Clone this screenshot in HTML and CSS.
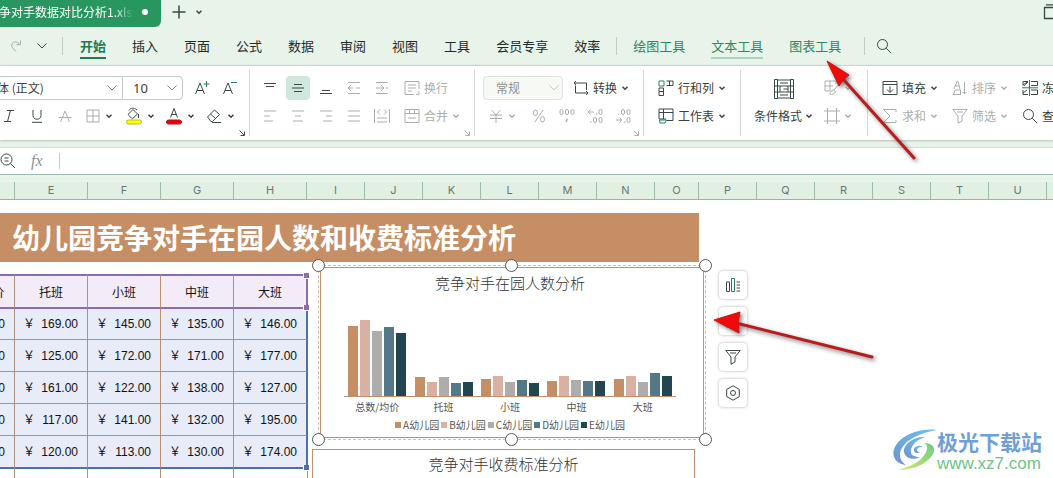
FILE: index.html
```html
<!DOCTYPE html>
<html lang="zh-CN">
<head>
<meta charset="utf-8">
<title>幼儿园竞争对手数据对比分析1.xlsx</title>
<link rel="stylesheet" href="styles.css">
</head>
<body>
<svg class="defs" aria-hidden="true">
  <symbol id="caret" viewBox="0 0 8 8"><path d="M1.5 2.8 4 5.3 6.500 2.800" stroke-width="1.500"/></symbol>
  <symbol id="chev" viewBox="0 0 12 12"><path d="M1.500 3.500 6 8l4.500-4.500"/></symbol>
  <symbol id="launch" viewBox="0 0 6 6"><path d="M.5.500 5 5M5.500 1.500v4h-4"/></symbol>
  <symbol id="search" viewBox="0 0 16 16"><circle cx="6.500" cy="6.500" r="5"/><path d="m10.200 10.200 5 5"/></symbol>
  <symbol id="funnel" viewBox="0 0 16 16"><path d="M.8 1.500h14.400L10 8v5l-4 2.200V8z"/><path d="M5 4h6" /></symbol>
</svg>

<header class="tabs">
  <div class="doc-tab"><span class="doc-name">争对手数据对比分析1.xlsx</span><i class="dot"></i></div>
  <button class="plain" aria-label="新建"><svg width="14" height="14" viewBox="0 0 14 14"><path d="M7 .5v13M.5 7h13" stroke-width="1.500"/></svg></button>
  <button class="plain list" aria-label="标签列表"><svg width="8" height="8"><use href="#caret"/></svg></button>
  <button class="plain window" aria-label="窗口"><svg width="16" height="16" viewBox="0 0 16 16"><path d="M3 .8h12M1.500 3.500h13v11h-13z" stroke-width="1.300"/></svg></button>
</header>

<nav class="menu">
  <button class="plain dim" aria-label="重做"><svg width="12" height="14" viewBox="0 0 12 14"><path d="M6 12.500 2.800 9C-.5 4.500 5 .5 9 4.500l1 1M10.500 1.500v4.200H6.300"/></svg></button>
  <button class="plain" aria-label="更多"><svg width="12" height="12"><use href="#chev"/></svg></button>
  <i class="bar"></i>
  <a class="on" href="#">开始</a><a href="#">插入</a><a href="#">页面</a><a href="#">公式</a><a href="#">数据</a><a href="#">审阅</a><a href="#">视图</a><a href="#">工具</a><a href="#">会员专享</a><a href="#">效率</a>
  <i class="bar mid"></i>
  <a class="tool" href="#">绘图工具</a><a class="tool under" href="#">文本工具</a><a class="tool" href="#">图表工具</a>
  <i class="bar end"></i>
  <button class="plain" aria-label="搜索"><svg width="16" height="16"><use href="#search"/></svg></button>
</nav>

<section class="ribbon">
  <div class="group g-font">
    <div class="row">
      <label class="combo face"><select aria-label="字体"><option>宋体 (正文)</option></select><svg width="12" height="12"><use href="#chev"/></svg></label>
      <label class="combo size"><select aria-label="字号"><option>10</option></select><svg width="12" height="12"><use href="#chev"/></svg></label>
      <button class="cell first" aria-label="增大字号"><svg width="16" height="16" viewBox="0 0 16 16"><path d="M1.500 14 6 3l4.500 11M3 10.500h6"/><path class="green" d="M12.500 1v6M9.500 4h6"/></svg></button>
      <button class="cell" aria-label="减小字号"><svg width="16" height="16" viewBox="0 0 16 16"><path d="M1.500 14 6 3l4.500 11M3 10.500h6"/><path class="green" d="M9 2.500h6"/></svg></button>
    </div>
    <div class="row fmt">
      <button class="cell" aria-label="斜体"><svg width="14" height="14" viewBox="0 0 14 14"><path d="M5 1.500h7M2 12.500h7M8.500 1.500l-3 11"/></svg></button>
      <button class="cell" aria-label="下划线"><svg width="14" height="14" viewBox="0 0 14 14"><path d="M3 1v5.500c0 5 8 5 8 0V1M2 13.300h10"/></svg></button>
      <button class="cell dim" aria-label="删除线"><svg width="14" height="14" viewBox="0 0 14 14"><path d="m2.500 13 4.500-11 4.500 11M.5 8.500h13"/></svg></button>
      <button class="split" aria-label="边框"><svg class="dimmed" width="14" height="14" viewBox="0 0 14 14"><path d="M1 1h12v12H1zM7 1v12M1 7h12"/></svg><svg width="8" height="8"><use href="#caret"/></svg></button>
      <button class="split" aria-label="填充颜色"><svg width="16" height="18" viewBox="0 0 16 18"><path d="M7 2.500 2.500 7c-.8 1 3.500 5 4.500 4.200L11.500 7zM3 3.500c1.500-3 5-3 8-.5M12.500 7v4"/><rect class="yellow" x=".5" y="13" width="15" height="4" rx="2"/></svg><svg width="8" height="8"><use href="#caret"/></svg></button>
      <button class="split" aria-label="字体颜色"><svg width="16" height="18" viewBox="0 0 16 18"><path d="m4.500 10.500 3.500-9 3.500 9M5.700 7.500h4.600"/><rect class="red" x=".5" y="13" width="15" height="4" rx="2"/></svg><svg width="8" height="8"><use href="#caret"/></svg></button>
      <button class="split" aria-label="清除"><svg width="16" height="16" viewBox="0 0 16 16"><path d="m1.500 9 7-7 5 4.500-7 7h-1.500zM4.500 6l5 4.500M6 14.500h9"/></svg><svg width="8" height="8"><use href="#caret"/></svg></button>
    </div>
    <svg class="launch" width="6" height="6"><use href="#launch"/></svg>
  </div>

  <div class="group g-align">
    <div class="row">
      <button class="cell" aria-label="顶端对齐"><svg width="14" height="14" viewBox="0 0 14 14"><path d="M1 2.500h12M3 5.500h8"/></svg></button>
      <button class="cell on" aria-label="垂直居中"><svg width="14" height="14" viewBox="0 0 14 14"><path d="M3 3.500h8M1 7h12M3 10.500h8"/></svg></button>
      <button class="cell" aria-label="底端对齐"><svg width="14" height="14" viewBox="0 0 14 14"><path d="M3 9.500h8M1 12.500h12"/></svg></button>
      <button class="cell dim" aria-label="减少缩进"><svg width="14" height="14" viewBox="0 0 14 14"><path d="M1 1.500h12M1 12.500h12M1 7h5m3 0h4M4 4 1 7l3 3"/></svg></button>
      <button class="cell dim" aria-label="增加缩进"><svg width="14" height="14" viewBox="0 0 14 14"><path d="M1 1.500h12M1 12.500h12M1 7h8m2 0h2M6 4l3 3-3 3"/></svg></button>
      <button class="text dim"><svg width="16" height="16" viewBox="0 0 16 16"><path d="M10 14.500H1V1.500h14V9M4 5h8M4 8h8M4 11h4M15 11v3.500h-3"/></svg>换行</button>
    </div>
    <div class="row">
      <button class="cell dim" aria-label="左对齐"><svg width="14" height="14" viewBox="0 0 14 14"><path d="M1 2h12M1 7h6M1 12h9"/></svg></button>
      <button class="cell dim" aria-label="居中"><svg width="14" height="14" viewBox="0 0 14 14"><path d="M1 2h12M4 7h6M2 12h10"/></svg></button>
      <button class="cell dim" aria-label="右对齐"><svg width="14" height="14" viewBox="0 0 14 14"><path d="M1 2h12M7 7h6M4 12h9"/></svg></button>
      <button class="cell dim" aria-label="两端对齐"><svg width="14" height="14" viewBox="0 0 14 14"><path d="M1 2h12M1 7h12M1 12h12"/></svg></button>
      <button class="cell dim" aria-label="分散对齐"><svg width="16" height="16" viewBox="0 0 16 16"><path d="M.5 1v14M15.500 1v14M3 10h10M3 14h10M6 1.500 3.500 4 6 6.500M10 1.500 12.500 4 10 6.500"/></svg></button>
      <button class="text dim"><svg width="16" height="16" viewBox="0 0 16 16"><path d="M1 1.500h14v13H1zM1 5.500h14M5.500 1.500v4M10.500 1.500v4M4 10h8"/></svg>合并<svg width="8" height="8"><use href="#caret"/></svg></button>
    </div>
    <svg class="launch dimmed" width="6" height="6"><use href="#launch"/></svg>
  </div>

  <div class="group g-num">
    <div class="row">
      <label class="combo kind"><select aria-label="数字格式"><option>常规</option></select><svg width="12" height="12"><use href="#chev"/></svg></label>
      <button class="text"><svg width="16" height="16" viewBox="0 0 16 16"><path d="M1 3h12.500V10M2.500 5.500v7.500H15M3 1l-2 2 2 2M13 11l2 2-2 2"/></svg>转换<svg width="8" height="8"><use href="#caret"/></svg></button>
    </div>
    <div class="row">
      <button class="split yen dim" aria-label="货币"><svg width="14" height="14" viewBox="0 0 14 14"><path d="m2.500 1 4.500 5 4.500-5M1 6h12M1 9.500h12M7 6v8"/></svg><svg width="8" height="8"><use href="#caret"/></svg></button>
      <button class="cell dim" aria-label="百分比"><svg width="14" height="14" viewBox="0 0 14 14"><ellipse cx="3.500" cy="3.800" rx="2" ry="2.800"/><ellipse cx="10.500" cy="10.200" rx="2" ry="2.800"/><path d="m11 1-8 12"/></svg></button>
      <button class="cell dim" aria-label="千位分隔"><svg width="16" height="16" viewBox="0 0 16 16"><rect x="1" y="1.500" width="3" height="5" rx="1.500"/><rect x="6.500" y="1.500" width="3" height="5" rx="1.500"/><rect x="12" y="1.500" width="3" height="5" rx="1.500"/><path d="M8 10.500v1.500l-1 2" stroke-width="1.500"/></svg></button>
      <button class="cell dim" aria-label="增加小数位"><svg width="16" height="16" viewBox="0 0 16 16"><path d="M7 4H1m2.500-2.500L1 4l2.500 2.500M9 6h1.500M3 14h1.500"/><rect x="12" y="1.500" width="3" height="5" rx="1.500"/><rect x="6.500" y="9.500" width="3" height="5" rx="1.500"/><rect x="12" y="9.500" width="3" height="5" rx="1.500"/></svg></button>
      <button class="cell dim" aria-label="减少小数位"><svg width="16" height="16" viewBox="0 0 16 16"><path d="M1 12h6M4.500 9.500 7 12l-2.500 2.500M3 6h1.500M9 14h1.500"/><rect x="6.500" y="1.500" width="3" height="5" rx="1.500"/><rect x="12" y="1.500" width="3" height="5" rx="1.500"/><rect x="12" y="9.500" width="3" height="5" rx="1.500"/></svg></button>
    </div>
    <svg class="launch dimmed" width="6" height="6"><use href="#launch"/></svg>
  </div>

  <div class="group g-cells">
    <div class="row"><button class="text"><svg width="16" height="16" viewBox="0 0 16 16"><path class="green" d="M1 1h5v5H1z"/><path d="M8.500 1H15v4.500H8.500M11.500 1v4.500M1 8h4.500v7.500H1zM1 11.500h4.500"/></svg>行和列<svg width="8" height="8"><use href="#caret"/></svg></button></div>
    <div class="row"><button class="text"><svg width="16" height="16" viewBox="0 0 16 16"><path d="M1 11V1h14v11.500h-6M1 4.500h14M5.500 1v10M1 11h7"/><path class="green" d="M1.500 12h7l-1.500 3H2z"/></svg>工作表<svg width="8" height="8"><use href="#caret"/></svg></button></div>
  </div>

  <div class="group g-style">
    <button class="big"><svg width="20" height="20" viewBox="0 0 20 20"><path d="M3.500.5h-3v19h3M16.500.5h3v19h-3M3.500.500v19M16.500.500v19M.500 7h3M.500 13h3M16.500 7h3M16.500 13h3M3.500 1h13M6 4h8M3.500 7h13M6 7v6M14 7v6M9.500 10H14M3.500 13h13M6 16h8M3.500 19h13"/></svg><span>条件格式<svg width="8" height="8"><use href="#caret"/></svg></span></button>
    <div class="pair">
      <button class="split dim" aria-label="表格样式"><svg width="16" height="16" viewBox="0 0 16 16"><path d="M6 11H1V1h11v3M1 6h8M6 1v10M15 4l-5 6M9.500 10c-3 0-2 3-4 4 3 1 6.500 0 5.500-3z"/></svg><svg width="8" height="8"><use href="#caret"/></svg></button>
      <button class="split dim" aria-label="单元格样式"><svg width="16" height="16" viewBox="0 0 16 16"><path d="M3.500 0v16M12.500 0v16M0 3h16M0 13h16"/></svg><svg width="8" height="8"><use href="#caret"/></svg></button>
    </div>
  </div>

  <div class="group g-edit">
    <div class="row">
      <button class="text"><svg width="16" height="16" viewBox="0 0 16 16"><path d="M1 1.500h14v13H1zM1 4.500h14M8 6.500V12M5 9.500 8 12.500l3-3"/></svg>填充<svg width="8" height="8"><use href="#caret"/></svg></button>
      <button class="text dim"><svg width="16" height="16" viewBox="0 0 16 16"><path d="M2 9 5 1.500h1L8 9M3 6h4M1 14.500h8M1.500 14.500 3 10h5.500v4.500M12.500 2v12M10.500 12l2 2 2-2"/></svg>排序<svg width="8" height="8"><use href="#caret"/></svg></button>
      <button class="text"><svg width="16" height="16" viewBox="0 0 16 16"><path d="M1 1.500h5M1 1.500v4M9 1.500h6.500v4H9M1 10v4.500h5M9 10h6.500v4.500H9M1 5l4-3M1 13l4-3"/><path class="green" d="M7.500 0v16M0 7.800h16M2 6l4-4"/></svg>冻结<svg width="8" height="8"><use href="#caret"/></svg></button>
    </div>
    <div class="row">
      <button class="text dim"><svg width="16" height="16" viewBox="0 0 16 16"><path d="M14 4V1.500H1.500L8 8l-6.500 6.500H14V12"/></svg>求和<svg width="8" height="8"><use href="#caret"/></svg></button>
      <button class="text dim"><svg width="16" height="16"><use href="#funnel"/></svg>筛选<svg width="8" height="8"><use href="#caret"/></svg></button>
      <button class="text"><svg width="16" height="16"><use href="#search"/></svg>查找<svg width="8" height="8"><use href="#caret"/></svg></button>
    </div>
  </div>
</section>

<section class="formula">
  <button class="plain" aria-label="缩小"><svg width="16" height="16" viewBox="0 0 16 16"><circle cx="6.500" cy="6.500" r="5.500"/><path d="m10.500 10.500 4.500 4.500M4.500 5h4M4.500 8h4"/></svg></button>
  <span class="fx">fx</span>
  <input aria-label="编辑栏">
</section>

<div class="cols" aria-hidden="true">
  <span class="c-d"></span><span class="c-w">E</span><span class="c-w">F</span><span class="c-w">G</span><span class="c-w">H</span><span>I</span><span>J</span><span>K</span><span>L</span><span>M</span><span>N</span><span class="c-o">O</span><span>P</span><span>Q</span><span>R</span><span>S</span><span>T</span><span>U</span><span></span>
</div>

<main class="sheet">
  <h1>幼儿园竞争对手在园人数和收费标准分析</h1>
  <div class="range">
    <table>
      <thead><tr><th>总数/均价</th><th>托班</th><th>小班</th><th>中班</th><th>大班</th></tr></thead>
      <tbody>
        <tr><td><p>￥<b>140.00</b></p></td><td><p>￥<b>169.00</b></p></td><td><p>￥<b>145.00</b></p></td><td><p>￥<b>135.00</b></p></td><td><p>￥<b>146.00</b></p></td></tr>
        <tr><td><p>￥<b>160.00</b></p></td><td><p>￥<b>125.00</b></p></td><td><p>￥<b>172.00</b></p></td><td><p>￥<b>171.00</b></p></td><td><p>￥<b>177.00</b></p></td></tr>
        <tr><td><p>￥<b>130.00</b></p></td><td><p>￥<b>161.00</b></p></td><td><p>￥<b>122.00</b></p></td><td><p>￥<b>138.00</b></p></td><td><p>￥<b>127.00</b></p></td></tr>
        <tr><td><p>￥<b>140.00</b></p></td><td><p>￥<b>117.00</b></p></td><td><p>￥<b>141.00</b></p></td><td><p>￥<b>132.00</b></p></td><td><p>￥<b>195.00</b></p></td></tr>
        <tr><td><p>￥<b>130.00</b></p></td><td><p>￥<b>120.00</b></p></td><td><p>￥<b>113.00</b></p></td><td><p>￥<b>130.00</b></p></td><td><p>￥<b>174.00</b></p></td></tr>
      </tbody>
      <tfoot><tr><td></td><td></td><td></td><td></td><td></td></tr></tfoot>
    </table>
    <i class="grip g1"></i><i class="grip g2"></i><i class="grip g3"></i>
  </div>

  <section class="chart picked">
    <h2>竞争对手在园人数分析</h2>
    <div class="plot">
      <div class="cat"><i style="height:70px"></i><i style="height:76px"></i><i style="height:65px"></i><i style="height:69px"></i><i style="height:63px"></i></div>
      <div class="cat"><i style="height:19px"></i><i style="height:14px"></i><i style="height:19px"></i><i style="height:13px"></i><i style="height:14px"></i></div>
      <div class="cat"><i style="height:17px"></i><i style="height:20px"></i><i style="height:14px"></i><i style="height:16px"></i><i style="height:13px"></i></div>
      <div class="cat"><i style="height:15px"></i><i style="height:20px"></i><i style="height:16px"></i><i style="height:15px"></i><i style="height:15px"></i></div>
      <div class="cat"><i style="height:17px"></i><i style="height:20px"></i><i style="height:14px"></i><i style="height:23px"></i><i style="height:20px"></i></div>
    </div>
    <div class="labels"><span>总数/均价</span><span>托班</span><span>小班</span><span>中班</span><span>大班</span></div>
    <div class="legend"><span><i></i>A幼儿园</span><span><i></i>B幼儿园</span><span><i></i>C幼儿园</span><span><i></i>D幼儿园</span><span><i></i>E幼儿园</span></div>
    <div class="frame"><i></i><i></i><i></i><i></i><i></i><i></i></div>
  </section>

  <section class="chart second"><h2>竞争对手收费标准分析</h2></section>

  <aside class="float">
    <button aria-label="图表元素"><svg width="16" height="16" viewBox="0 0 16 16"><path d="M1.500 5h3v9.500h-3zM11.500 5H15M11.500 8H15M11.500 11H15M11.500 14H15"/><path class="green" d="M6.500 1.500h3v13h-3z"/></svg></button>
    <button aria-label="图表样式"><svg width="16" height="16" viewBox="0 0 16 16"><path d="m6 8 6-6.500c1.500-1.200 4 .5 2.500 2.500L9 10.500zM6 8c-3 0-2 5-5 5.500 3 2 8 .5 8-3"/></svg></button>
    <button aria-label="图表筛选"><svg width="16" height="16"><use href="#funnel"/></svg></button>
    <button aria-label="设置图表"><svg width="16" height="16" viewBox="0 0 16 16"><path d="m8 .8 6.300 3.600v7.200L8 15.200l-6.300-3.600V4.400z"/><circle cx="8" cy="8" r="2.500"/></svg></button>
  </aside>

  <div class="mark">
    <svg width="44" height="42" viewBox="0 0 44 42">
      <defs>
        <linearGradient id="blue" x1="0" y1="1" x2="1" y2="0"><stop offset="0" stop-color="#6f93d2"/><stop offset="1" stop-color="#6fc4ec"/></linearGradient>
        <linearGradient id="lime" x1="0" y1="1" x2="1" y2="0"><stop offset="0" stop-color="#d5e66d"/><stop offset="1" stop-color="#6dcb87"/></linearGradient>
      </defs>
      <path fill="url(#blue)" d="M44 1C29-1 10 5 3 16c-6 10-1 19 10 20-6-4-8-10-4-17C14 10 27 4 44 1z"/>
      <path fill="url(#blue)" d="M33 8C21 7 10 15 11 23c1 6 9 9 16 5-6 0-10-2-9-7 1-6 7-11 15-13z"/>
      <path fill="url(#blue)" d="M30 18c-4-3-10 0-9 4 1 2 4 3 6 1-3 0-4-2-2-4 1-1 3-1 5-1z"/>
      <path fill="url(#lime)" d="M31 14c12 0 13 9 5 16-7 7-18 11-32 11 14-3 24-9 28-16 3-5 3-9-1-11z"/>
    </svg>
    <div><strong>极光下载站</strong><span>www.xz7.com</span></div>
  </div>
</main>

<svg class="arrows" width="1053" height="478" viewBox="0 0 1053 478" aria-hidden="true">
  <g><path class="shaft" d="M843 79 914 158"/><path class="head" d="m827 61 12 25 4-6 6-5z"/></g>
  <g><path class="shaft" d="m736 323 136 34"/><path class="head" d="m714 320 26-8-2 10 1 11z"/></g>
</svg>
</body>
</html>
```
FILE: styles.css
```css
* { box-sizing: border-box; }
body {
  margin: 0;
  height: 100vh;
  display: flex;
  flex-direction: column;
  overflow: hidden;
  position: relative;
  background: #e8f3ea;
  color: #36423d;
  font: 12px/16px "Noto Sans CJK SC", sans-serif;
}
button, select, input { font: inherit; color: inherit; border: 0; background: none; padding: 0; margin: 0; }
a { color: inherit; text-decoration: none; }
svg { flex: none; fill: none; stroke: #3a4843; stroke-width: 1; }
.defs { position: absolute; width: 0; height: 0; }
.green { stroke: #23805c; }
.yellow { fill: #ffff00; stroke: #b9b93a; }
.red { fill: #e60012; stroke: #b11; }
.dim { color: #a9afac; }
.dim svg, .dimmed { stroke: #a9afac; }
.plain { display: flex; align-items: center; }

/* document tabs */
.tabs { flex: none; height: 27px; display: flex; gap: 12px; padding-bottom: 3px; }
.doc-tab {
  width: 161px; height: 27px; margin-right: -1px; padding-right: 13px;
  display: flex; align-items: center; justify-content: space-between;
  background: #27965f; color: #fff; border-radius: 0 0 6px 0; padding-bottom: 3px;
}
.doc-name {
  width: 136px; overflow: hidden; white-space: nowrap; margin-left: -1px;
  -webkit-mask-image: linear-gradient(90deg, #000 115px, transparent 135px);
  mask-image: linear-gradient(90deg, #000 115px, transparent 135px);
}
.dot { width: 6px; height: 6px; border-radius: 50%; background: #fff; }
.tabs .list { margin-left: -3px; }
.tabs .window { margin: 0 -6px 0 auto; }

/* menu */
.menu { flex: none; height: 38px; display: flex; align-items: center; gap: 26px; padding-left: 10px; color: #1f2b26; font-size: 13px; white-space: nowrap; }
.menu a { height: 26px; line-height: 26px; border-bottom: 2px solid transparent; }
.menu .plain + .plain { margin-left: -12px; }
.menu .on { color: #1d7b55; font-weight: 700; border-color: #1d7b55; }
.menu .tool { color: #2a8a61; }
.menu .under { border-color: #a9d3c0; }
.bar { width: 1px; height: 18px; background: #c0cbc5; margin: 0 -9px 0 -12px; }
.bar.mid { margin: 0 -10px; }
.bar.end { margin: 0 -15px 0 -3px; }

/* ribbon */
.ribbon { flex: none; display: flex; padding: 4px 0; overflow: hidden; background: #fff; border-top: 1px solid #ccd3cf; box-shadow: 0 1px 2px #b4bfb9; white-space: nowrap; }
.group { flex: none; position: relative; padding: 4px 0 6px; border-right: 1px solid #d3d7d5; }
.group:last-child { border: 0; }
.row { height: 28px; display: flex; align-items: center; }
.cell { width: 28px; height: 24px; display: grid; place-items: center; }
.cell.on { width: 24px; margin: 0 2px; background: #d0e7dd; border-radius: 4px; }
.split { width: 40px; height: 24px; display: flex; align-items: center; gap: 5px; padding-left: 7px; }
.text { display: flex; align-items: center; gap: 4px; }
.launch { position: absolute; right: 4px; bottom: 0; }
.combo { display: grid; align-items: center; height: 24px; border: 1px solid #c5cac7; font-size: 13px; }
.combo select { grid-area: 1 / 1; appearance: none; width: 100%; height: 22px; outline: 0; }
.combo svg { grid-area: 1 / 1; justify-self: end; margin-right: 4px; stroke: #7c8581; pointer-events: none; }
.face { width: 138px; margin-left: -16px; border-right: 0; font-size: 12px; }
.size { width: 61px; border-radius: 0 4px 4px 0; font-family: "Noto Sans", sans-serif; }
.size select { padding-left: 10px; }
.kind { width: 80px; border-radius: 4px; border-color: #dfe3e0; background: #f6f9f4; color: #8b918e; font-size: 12px; margin-right: 10px; }
.kind select { padding-left: 12px; }
.kind svg { margin-right: 2px; stroke: #c5cac7; }
.g-font { width: 250px; }
.cell.first { margin-left: 5px; }
.fmt { margin-left: -5px; }
.g-align { width: 225px; padding-left: 6px; }
.g-align .text { margin-left: 8px; }
.g-num { width: 169px; padding-left: 8px; }
.yen { width: 42px; padding-left: 6px; }
.g-cells { width: 97px; padding-left: 14px; }
.g-style { width: 127px; padding-left: 13px; display: flex; gap: 11px; }
.big { display: flex; flex-direction: column; align-items: center; gap: 9px; padding-top: 5px; }
.big span { display: flex; align-items: center; gap: 3px; }
.pair { display: grid; grid-template-rows: 28px 28px; align-items: center; }
.pair .split { padding-left: 0; gap: 4px; }
.g-edit { padding-left: 14px; }
.g-edit .row { gap: 14px; }

/* formula bar */
.formula { flex: none; height: 28px; margin-top: 7px; display: flex; align-items: center; background: #fff; border: solid #9dbbaa; border-width: 1px 0; border-top-color: #cfe0d5; }
.fx { width: 43px; padding-left: 15px; font: italic 16px/24px "Liberation Serif", serif; color: #8c9390; }
.formula input { flex: 1; height: 16px; border-left: 1px solid #c5cac7; }

/* column letters */
.cols { flex: none; height: 25px; display: flex; padding-top: 7px; border-bottom: 1px solid #93b8a1; overflow: hidden; color: #6c7671; font: 11px/17px Inter, sans-serif; text-align: center; }
.cols span { flex: none; width: 58px; border-right: 1px solid #9dbbaa; background: #e2efe3; }
.cols .c-d { width: 15px; }
.cols .c-w { width: 73px; }
.cols .c-o { width: 44px; }

/* sheet */
.sheet { flex: 1; position: relative; overflow: hidden; background: #fff; padding-top: 13px; }
.sheet h1 { width: 699px; margin: 0 0 12px; padding-left: 12px; background: #c68e64; color: #fff; font-size: 28px; line-height: 49px; font-weight: 700; }
.range { position: relative; width: 308px; }
table { width: 366px; margin-left: -58px; table-layout: fixed; border-collapse: separate; border-spacing: 0; color: #111; }
th, td { width: 73px; padding: 0; border-right: 1px solid #b98f78; }
th:last-child { width: 74px; border-right: 2px solid #8e6bae; }
th { height: 35px; font-weight: 400; background: #f3ebf6; border-top: 2px solid #8e6bae; border-bottom: 2px solid #8e6bae; }
tbody td { height: 32px; background: #e8ecf8; border-bottom: 1px solid #b98f78; }
tbody tr:first-child td { height: 31px; }
tbody tr:last-child td { height: 33px; border-bottom: 2px solid #4c70aa; }
tbody td:last-child { border-right: 2px solid #4c70aa; }
tfoot td { height: 24px; }
td p { margin: 0; padding: 0 9px 0 8px; display: flex; justify-content: space-between; }
td b { font: 12px/18px "Liberation Sans", sans-serif; }
.grip { position: absolute; right: -1px; width: 6px; height: 6px; background: #8e6bae; border: solid #fff; border-width: 0 0 1px 1px; }
.g1 { top: -1px; }
.g2 { top: 31px; }
.g3 { top: 191px; background: #4c70aa; }

/* charts float over the grid */
.chart { position: absolute; background: #fff; border: 1px solid #c0906f; }
.chart h2 { margin: 0; text-align: center; font-size: 15px; line-height: 20px; font-weight: 300; color: #333; }
.picked { left: 320px; top: 67px; width: 384px; height: 171px; padding: 5px 27px 0 23px; box-shadow: 0 0 0 3px #fff; }
.second { left: 312px; top: 249px; width: 383px; height: 171px; padding-top: 4px; }
.plot { height: 104px; display: flex; border-bottom: 1px solid #c0906f; }
.cat { flex: 1; display: flex; align-items: flex-end; justify-content: center; gap: 2px; }
.cat i { width: 10px; }
.cat i:nth-child(1), .legend span:nth-child(1) i { background: #c68e64; }
.cat i:nth-child(2), .legend span:nth-child(2) i { background: #d8b1a2; }
.cat i:nth-child(3), .legend span:nth-child(3) i { background: #aeadac; }
.cat i:nth-child(4), .legend span:nth-child(4) i { background: #557888; }
.cat i:nth-child(5), .legend span:nth-child(5) i { background: #234552; }
.labels { display: flex; margin-top: 2px; font-size: 10px; color: #555; }
.labels span { flex: 1; text-align: center; }
.legend { display: flex; justify-content: center; gap: 2px; margin-top: 2px; font-size: 10px; line-height: 15px; color: #555; white-space: nowrap; }
.legend span { display: flex; align-items: center; gap: 2px; }
.legend i { width: 6px; height: 6px; }
.frame { position: absolute; inset: -3px; border: 1px dashed #c9bdb4; }
.frame i { position: absolute; width: 13px; height: 13px; border: 1px solid #555; border-radius: 50%; background: #fff; }
.frame i:nth-child(-n+3) { top: -7px; }
.frame i:nth-child(n+4) { bottom: -7px; }
.frame i:nth-child(3n+1) { left: -7px; }
.frame i:nth-child(3n+2) { left: calc(50% - 7px); }
.frame i:nth-child(3n) { right: -7px; }

.float { position: absolute; left: 719px; top: 71px; display: grid; gap: 8px; }
.float button { width: 28px; height: 28px; display: grid; place-items: center; background: #fff; border-radius: 4px; box-shadow: 0 0 3px #aaa; }

.mark { position: absolute; right: 11px; bottom: 5px; display: flex; align-items: center; }
.mark svg { stroke: none; }
.mark div { display: grid; }
.mark strong { font-size: 21px; line-height: 28px; color: #6f9fd8; }
.mark span { font: 17px/18px "Liberation Sans", sans-serif; color: #6cc487; }

.arrows { position: absolute; left: 0; top: 0; pointer-events: none; filter: drop-shadow(2px 2px 2px #777); }
.shaft { stroke: #b81c1c; stroke-width: 3; stroke-linecap: round; }
.head { fill: #f00a0a; stroke: #c51616; }
```
